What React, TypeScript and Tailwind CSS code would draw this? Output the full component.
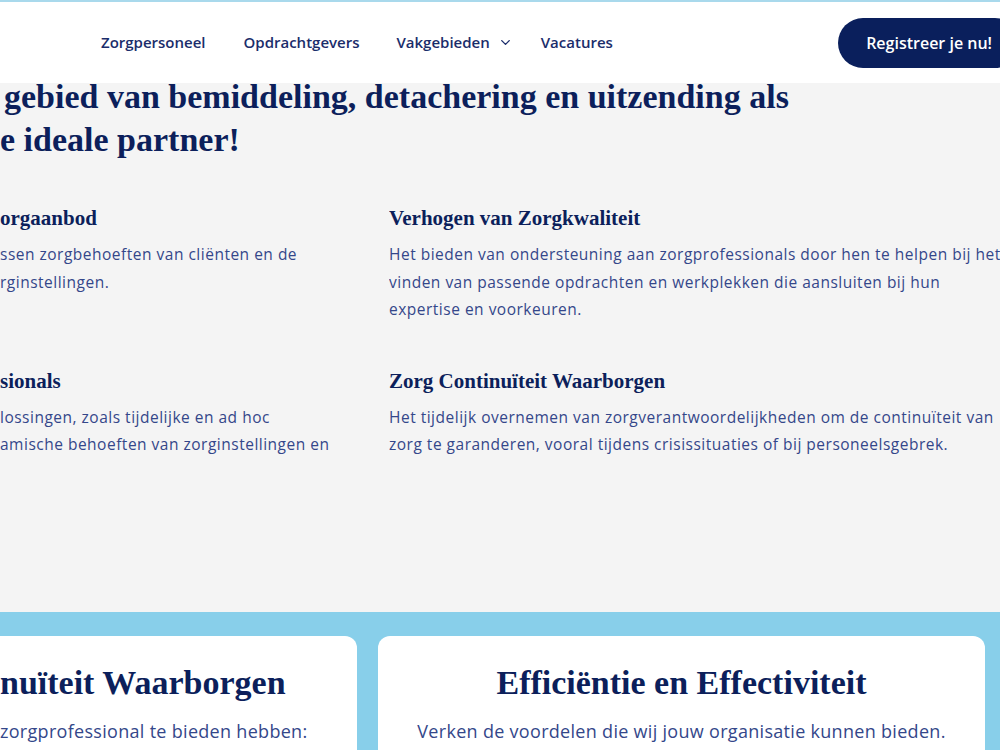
import { ChevronDown } from "lucide-react";

const SERIF = "font-['Liberation_Serif',serif]";
const SANS = "font-['Open_Sans',sans-serif]";

interface FeatureProps {
  title: string;
  lines: string[];
}

function Feature({ title, lines }: FeatureProps) {
  return (
    <div className="overflow-hidden">
      <h3 className={`${SERIF} whitespace-nowrap text-[21px] font-bold leading-[28px] text-[#0c1f5b]`}>
        {title}
      </h3>
      <div className="mt-[9px]">
        {lines.map((line) => (
          <p
            key={line}
            className={`${SANS} whitespace-nowrap text-[15.5px] leading-[27.5px] tracking-[0.5px] text-[#34478a]`}
          >
            {line}
          </p>
        ))}
      </div>
    </div>
  );
}

export default function App() {
  return (
    <div className="h-[750px] w-[1000px] overflow-hidden bg-[#f4f4f4]">
      {/* Header */}
      <header className="relative z-10 h-[83px] border-t-2 border-[#a9d9ec] bg-white">
        <div className="flex h-full items-center">
          <nav className={`${SANS} ml-[101px] flex items-center text-[15px] font-semibold text-[#1b2d6b]`}>
            <a className="mr-[38px]">Zorgpersoneel</a>
            <a className="mr-[37px]">Opdrachtgevers</a>
            <a className="flex items-center">
              Vakgebieden
              <ChevronDown className="ml-[8px] h-[15px] w-[15px]" strokeWidth={2.2} />
            </a>
            <a className="ml-[28px]">Vacatures</a>
          </nav>
          <button
            className={`${SANS} ml-auto -mr-[20px] h-[50px] rounded-full bg-[#0a1f5c] px-[28px] text-[16px] font-semibold text-white`}
          >
            Registreer je nu!
          </button>
        </div>
      </header>

      {/* Intro + features */}
      <section className="flex h-[529px] flex-col">
        <h2 className={`${SERIF} -mt-[8px] text-[34px] font-bold leading-[43px] text-[#0c1f5b]`}>
          <span className="block whitespace-nowrap pl-[4px]">
            gebied van bemiddeling, detachering en uitzending als
          </span>
          <span className="block whitespace-nowrap">e ideale partner!</span>
        </h2>

        <div className="mt-[43px] grid grid-cols-[389px_611px] gap-y-[43px]">
          <Feature
            title="orgaanbod"
            lines={["ssen zorgbehoeften van cliënten en de", "rginstellingen."]}
          />
          <Feature
            title="Verhogen van Zorgkwaliteit"
            lines={[
              "Het bieden van ondersteuning aan zorgprofessionals door hen te helpen bij het",
              "vinden van passende opdrachten en werkplekken die aansluiten bij hun",
              "expertise en voorkeuren.",
            ]}
          />
          <Feature
            title="sionals"
            lines={[
              "lossingen, zoals tijdelijke en ad hoc",
              "amische behoeften van zorginstellingen en",
            ]}
          />
          <Feature
            title="Zorg Continuïteit Waarborgen"
            lines={[
              "Het tijdelijk overnemen van zorgverantwoordelijkheden om de continuïteit van",
              "zorg te garanderen, vooral tijdens crisissituaties of bij personeelsgebrek.",
            ]}
          />
        </div>
      </section>

      {/* Cards */}
      <section className="flex h-[200px] gap-[21px] bg-[#88cfea] pt-[24px]">
        <div className="-ml-[20px] w-[377px] shrink-0 overflow-hidden rounded-xl bg-white pl-[20px] pt-[26px]">
          <h3 className={`${SERIF} whitespace-nowrap text-[34px] font-bold leading-[42px] text-[#0c1f5b]`}>
            nuïteit Waarborgen
          </h3>
          <p className={`${SANS} mt-[13px] whitespace-nowrap text-[18px] leading-[28px] tracking-[0.3px] text-[#34478a]`}>
            zorgprofessional te bieden hebben:
          </p>
        </div>
        <div className="w-[607px] shrink-0 rounded-xl bg-white pt-[26px] text-center">
          <h3 className={`${SERIF} text-[34px] font-bold leading-[42px] text-[#0c1f5b]`}>
            Efficiëntie en Effectiviteit
          </h3>
          <p className={`${SANS} mt-[13px] text-[18px] leading-[28px] tracking-[0.3px] text-[#34478a]`}>
            Verken de voordelen die wij jouw organisatie kunnen bieden.
          </p>
        </div>
      </section>
    </div>
  );
}
